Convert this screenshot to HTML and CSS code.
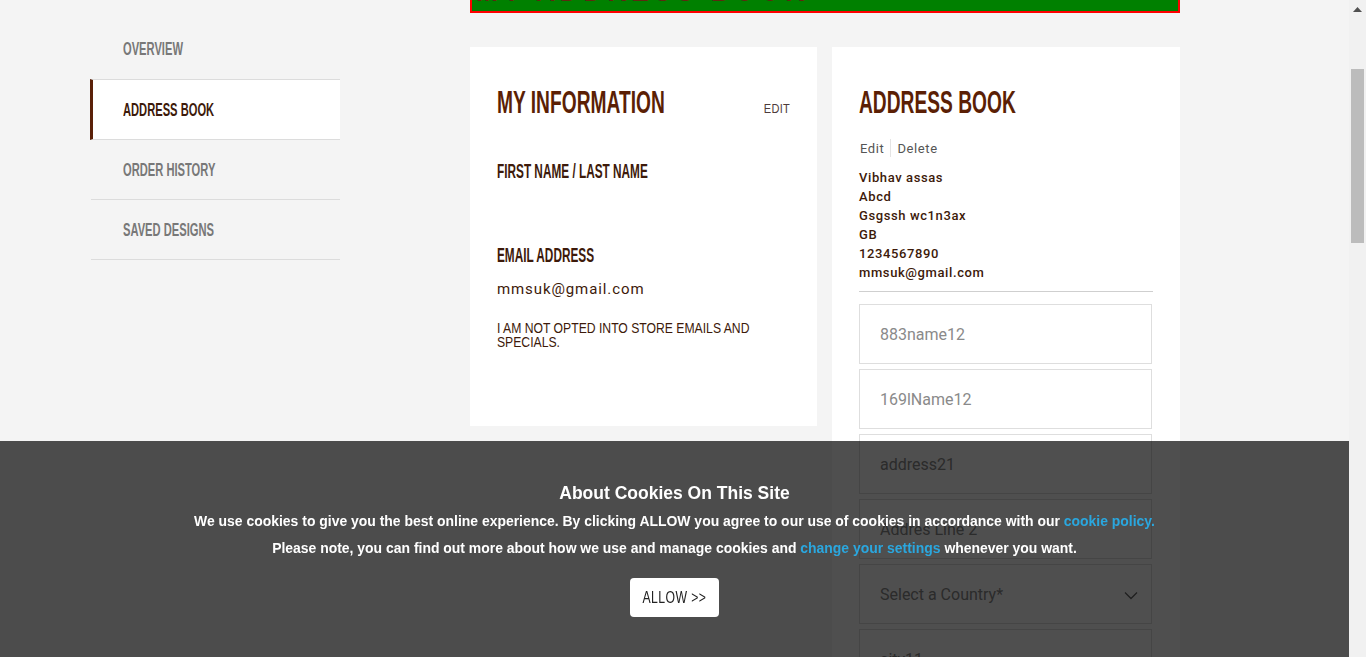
FILE: index.html
```html
<!DOCTYPE html>
<html lang="en">
<head>
<meta charset="utf-8">
<title>Address Book</title>
<link rel="stylesheet" href="styles.css">
</head>
<body>
<div class="viewport">
  <div class="page">
    <nav class="side">
      <a class="side-item"><span class="cx nav-text">OVERVIEW</span></a>
      <a class="side-item active"><span class="cx nav-text">ADDRESS BOOK</span></a>
      <a class="side-item"><span class="cx nav-text">ORDER HISTORY</span></a>
      <a class="side-item"><span class="cx nav-text">SAVED DESIGNS</span></a>
    </nav>
    <main class="main">
      <div class="banner"><span class="cx banner-text">MY ADDRESS BOOK</span></div>
      <div class="cards">
        <section class="card info">
          <div class="card-head">
            <h2 class="cx title">MY INFORMATION</h2>
            <a class="edit">EDIT</a>
          </div>
          <h3 class="cx label">FIRST NAME / LAST NAME</h3>
          <h3 class="cx label email-label">EMAIL ADDRESS</h3>
          <p class="email">mmsuk@gmail.com</p>
          <p class="optin">I AM NOT OPTED INTO STORE EMAILS AND SPECIALS.</p>
        </section>
        <section class="card book">
          <h2 class="cx title">ADDRESS BOOK</h2>
          <div class="actions"><a>Edit</a><span class="sep"></span><a>Delete</a></div>
          <address class="addr">
            <span>Vibhav assas</span>
            <span>Abcd</span>
            <span>Gsgssh wc1n3ax</span>
            <span>GB</span>
            <span>1234567890</span>
            <span>mmsuk@gmail.com</span>
          </address>
          <div class="fields">
            <div class="field">883name12</div>
            <div class="field">169lName12</div>
            <div class="field">address21</div>
            <div class="field">Addres Line 2</div>
            <div class="field select">Select a Country*
              <svg class="chev" width="14" height="9" viewBox="0 0 14 9"><path d="M1 1.5 L7 7.5 L13 1.5" fill="none" stroke="#666" stroke-width="1.3"/></svg>
            </div>
            <div class="field">city11</div>
          </div>
        </section>
      </div>
    </main>
  </div>
  <div class="scrollbar">
    <svg class="sb-arrow" width="9" height="5" viewBox="0 0 9 5"><path d="M0 5 L4.5 0 L9 5 Z" fill="#505050"/></svg>
    <div class="sb-thumb"></div>
  </div>
</div>
<div class="cookie">
  <h4 class="cookie-title">About Cookies On This Site</h4>
  <p class="cookie-line">We use cookies to give you the best online experience. By clicking ALLOW you agree to our use of cookies in accordance with our <a>cookie policy.</a></p>
  <p class="cookie-line">Please note, you can find out more about how we use and manage cookies and <a>change your settings</a> whenever you want.</p>
  <button class="allow"><span class="cx allow-text">ALLOW &gt;&gt;</span></button>
</div>
</body>
</html>
```
FILE: styles.css
```css
html, body {
  margin: 0;
  padding: 0;
  height: 657px;
  overflow: hidden;
}
body {
  background: #f4f4f4;
  font-family: "Liberation Sans", Arial, sans-serif;
  color: #3f1c0c;
}
.viewport {
  display: flex;
  height: 657px;
}
.page {
  width: 1349px;
  flex-shrink: 0;
  display: flex;
  padding-left: 90px;
  box-sizing: border-box;
}
.cx {
  display: inline-block;
  white-space: nowrap;
  transform-origin: left center;
}

/* side nav */
.side {
  width: 250px;
  flex-shrink: 0;
  margin-top: 19px;
  display: flex;
  flex-direction: column;
}
.side-item {
  height: 60px;
  flex-shrink: 0;
  box-sizing: border-box;
  display: flex;
  align-items: center;
  padding-left: 32px;
  margin-left: 1px;
  border-bottom: 1px solid #dcdcdc;
  color: #787878;
}
.side-item:first-child { height: 61px; }
.nav-text {
  font-weight: bold;
  font-size: 18px;
  line-height: 20px;
  transform: scaleX(0.62);
}
.side-item.active {
  background: #fff;
  color: #3d1a0a;
  margin-left: 0;
  border-left: 3px solid #5a2008;
  padding-left: 30px;
  margin-top: -1px;
  border-top: 1px solid #dcdcdc;
  height: 61px;
}

/* main */
.main {
  margin-left: 130px;
  width: 710px;
  flex-shrink: 0;
  display: flex;
  flex-direction: column;
}
.banner {
  height: 60px;
  flex-shrink: 0;
  margin-top: -47px;
  background: #008000;
  border: 2px solid #ff0000;
  box-sizing: border-box;
  padding: 9px 0 0 4px;
  overflow: hidden;
}
.banner-text {
  font-size: 44px;
  line-height: 44px;
  font-weight: bold;
  color: #5b2a10;
  transform: scaleX(0.6);
  letter-spacing: 8px;
}
.cards {
  margin-top: 34px;
  flex-shrink: 0;
  display: flex;
  gap: 15px;
  align-items: flex-start;
}
.card {
  background: #fff;
  box-sizing: border-box;
  padding: 39px 27px 0 27px;
  display: flex;
  flex-direction: column;
  align-items: flex-start;
}
.info {
  width: 347px;
  height: 379px;
}
.book {
  width: 348px;
  height: 640px;
}
.card-head {
  display: flex;
  align-items: baseline;
  width: 100%;
}
.title {
  margin: 0;
  font-size: 32px;
  line-height: 33px;
  font-weight: bold;
  color: #5b1f05;
  transform: scaleX(0.6);
}
.card-head .title {
  flex: 1;
  min-width: 0;
}
.edit {
  font-size: 13px;
  letter-spacing: 0.4px;
  color: #4d3b3b;
  transform: scaleX(0.85);
  transform-origin: right center;
}
.label {
  margin: 41px 0 0 0;
  font-size: 20px;
  line-height: 22px;
  font-weight: bold;
  color: #3d1a0a;
  transform: scaleX(0.59);
}
.email-label { margin-top: 62px; }
.email {
  margin: 14px 0 0 0;
  font-family: "Roboto", sans-serif;
  font-size: 15px;
  line-height: 18px;
  letter-spacing: 0.9px;
  color: #3d1a0a;
}
.optin {
  margin: 23px 0 0 0;
  font-size: 14px;
  line-height: 14px;
  color: #3d1a0a;
  width: 300px;
  transform: scaleX(0.87);
  transform-origin: left top;
}

/* address book */
.actions {
  margin-top: 20px;
  display: flex;
  align-items: center;
  font-family: "Roboto", sans-serif;
  font-size: 13px;
  letter-spacing: 0.6px;
  color: #555;
  padding-left: 1px;
  height: 20px;
}
.sep {
  width: 1px;
  height: 18px;
  background: #e4e4e4;
  margin: 0 6px;
}
.addr {
  margin-top: 11px;
  width: 294px;
  font-style: normal;
  display: flex;
  flex-direction: column;
  font-family: "Roboto", sans-serif;
  font-weight: 500;
  font-size: 13px;
  line-height: 19px;
  letter-spacing: 0.6px;
  color: #3d1a0a;
  padding-bottom: 9px;
  border-bottom: 1px solid #cfcfcf;
}
.fields {
  margin-top: 12px;
  display: flex;
  flex-direction: column;
  gap: 5px;
  width: 293px;
}
.field {
  height: 60px;
  flex-shrink: 0;
  box-sizing: border-box;
  border: 1px solid #dedede;
  display: flex;
  align-items: center;
  padding-left: 20px;
  font-family: "Roboto", sans-serif;
  font-size: 16px;
  color: #8a8a8a;
  position: relative;
}
.select .chev {
  position: absolute;
  right: 13px;
  top: 26px;
}

/* scrollbar */
.scrollbar {
  width: 17px;
  height: 657px;
  background: #f1f1f1;
  position: relative;
}
.sb-arrow {
  position: absolute;
  left: 4px;
  top: 7px;
}
.sb-thumb {
  position: absolute;
  left: 2px;
  top: 69px;
  width: 13px;
  height: 174px;
  background: #bcbcbc;
}

/* cookie */
.cookie {
  position: fixed;
  left: 0;
  top: 441px;
  width: 1349px;
  height: 216px;
  background: rgba(0, 0, 0, 0.69);
  display: flex;
  flex-direction: column;
  align-items: center;
  color: #fff;
  box-sizing: border-box;
  padding-top: 40px;
}
.cookie-title {
  margin: 0;
  font-size: 17.5px;
  line-height: 24px;
  font-weight: bold;
}
.cookie-line {
  margin: 5px 0 0 0;
  font-size: 13.95px;
  line-height: 22px;
  font-weight: bold;
}
.cookie-line + .cookie-line { margin-top: 5px; }
.cookie-line a { color: #2aa7df; }
.allow {
  margin-top: 19px;
  width: 89px;
  height: 39px;
  border: none;
  border-radius: 4px;
  background: #fff;
  padding: 0;
  display: flex;
  align-items: center;
  justify-content: center;
}
.allow-text {
  font-family: "Liberation Sans", Arial, sans-serif;
  font-size: 17px;
  color: #222;
  letter-spacing: 0.6px;
  transform: scaleX(0.72);
  transform-origin: center center;
}
```
